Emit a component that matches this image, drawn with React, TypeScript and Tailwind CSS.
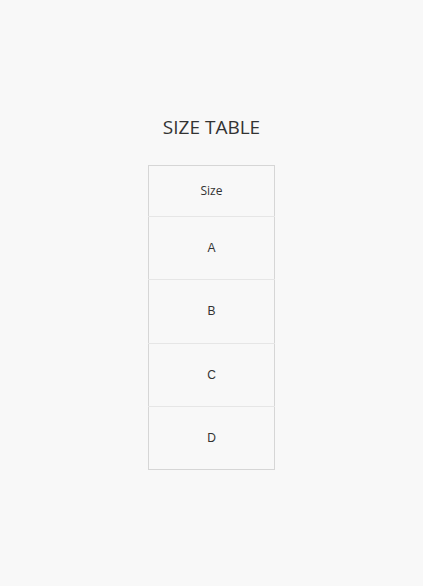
export default function App() {
    return (
        <div className="flex min-h-[586px] w-full flex-col items-center bg-[#f8f8f8] pt-[114px]">
            {/* Title */}
            <h1 className="font-['Open_Sans',sans-serif] text-[19px] leading-[27px] text-[#333333]">SIZE TABLE</h1>
            {/* Table */}
            <table className="mt-[24px] w-[127px] border-collapse border border-[#d6d6d6] bg-[#f8f8f8]">
                <thead>
                    <tr>
                        <th className="h-[51px] border-b border-[#e6e6e6] font-['Open_Sans',sans-serif] text-[12px] font-normal text-[#333333]">
                            Size
                        </th>
                    </tr>
                </thead>
                <tbody>
                    {["A", "B", "C", "D"].map((s, i) => (
                        <tr key={s}>
                            <td
                                className={
                                    i < 3
                                        ? "h-[63.25px] border-b border-[#e6e6e6] text-center font-['Liberation_Sans',sans-serif] text-[12px] text-[#333333]"
                                        : "h-[63.25px] text-center font-['Liberation_Sans',sans-serif] text-[12px] text-[#333333]"
                                }
                            >
                                {s}
                            </td>
                        </tr>
                    ))}
                </tbody>
            </table>
        </div>
    );
}
